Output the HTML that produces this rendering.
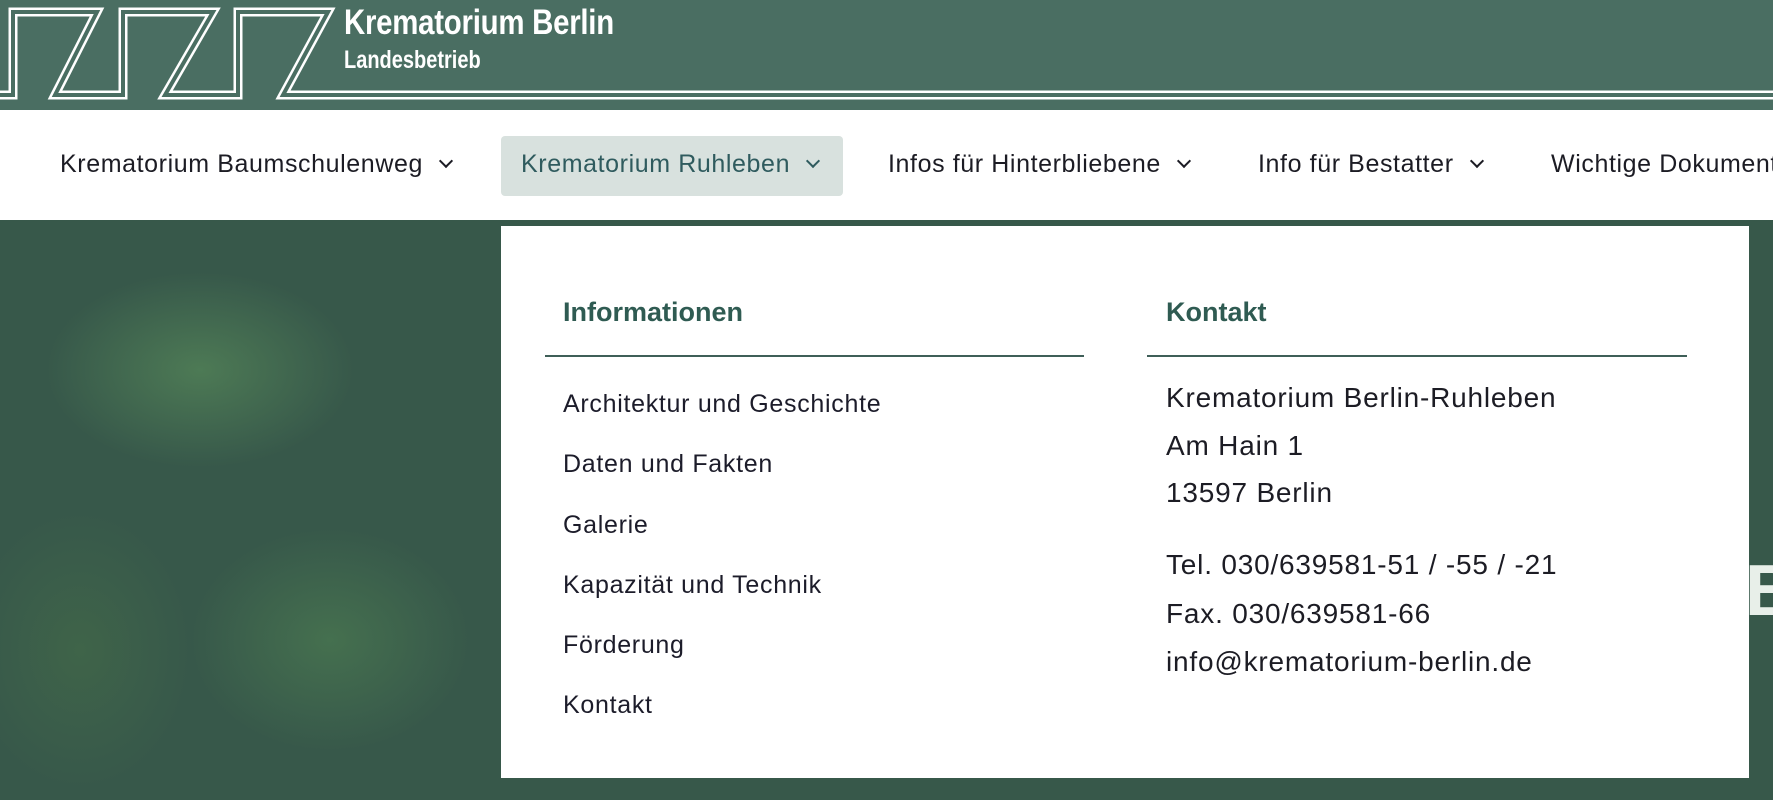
<!DOCTYPE html>
<html><head><meta charset="utf-8"><style>
*{margin:0;padding:0;box-sizing:border-box}
body{width:1773px;height:800px;overflow:hidden;position:relative;font-family:"Liberation Sans",sans-serif;background:#36564a}
#hdr{position:absolute;left:0;top:0;width:1773px;height:110px;background:#4a6e62}
#nav{position:absolute;left:0;top:110px;width:1773px;height:110px;background:#fff}
.ni{position:absolute;top:150px;font-size:25px;color:#1c1c24;white-space:nowrap;letter-spacing:0.6px}
.chev{display:inline-block;width:10px;height:10px;border-right:2.5px solid currentColor;border-bottom:2.5px solid currentColor;transform:rotate(45deg);margin-left:18px;position:relative;top:-6px}
#btn{position:absolute;left:501px;top:136px;width:342px;height:60px;background:#d8e1de;border-radius:4px}
#bg{position:absolute;left:0;top:220px;width:1773px;height:580px;background:
radial-gradient(ellipse 220px 140px at 200px 150px,#4d7a55 0%,transparent 70%),
radial-gradient(ellipse 200px 160px at 330px 420px,#45704f 0%,transparent 70%),
radial-gradient(ellipse 160px 200px at 80px 430px,#3f6449 0%,transparent 70%),
#37584a}
#dd{position:absolute;left:501px;top:226px;width:1248px;height:552px;background:#fff}
.h{position:absolute;font-size:27px;font-weight:bold;color:#2f5b52;letter-spacing:0px}
.ln{position:absolute;height:1.5px;background:#3f5f58}
.lk{position:absolute;left:563px;font-size:25px;color:#1c1c2a;letter-spacing:0.7px}
.ct{position:absolute;left:1166px;font-size:28px;color:#1c1c24;letter-spacing:0.8px}
</style></head><body>
<div id="hdr">
<svg width="1773" height="110" style="position:absolute;left:0;top:0">
<path d="M0 95 H13 V12 H97 L55 95 H123 V12 H213 L165 95 H238 V12 H328 L283 95 H1773" fill="none" stroke="#fff" stroke-width="9" stroke-linejoin="miter"/>
<path d="M0 95 H13 V12 H97 L55 95 H123 V12 H213 L165 95 H238 V12 H328 L283 95 H1773" fill="none" stroke="#4a6e62" stroke-width="4" stroke-linejoin="miter"/>
</svg>
<div style="position:absolute;left:344px;top:3px;color:#fff;font-weight:bold;font-size:35px;transform:scaleX(0.84);transform-origin:left;letter-spacing:-0.3px">Krematorium Berlin</div>
<div style="position:absolute;left:344px;top:46px;color:#fff;font-weight:bold;font-size:25px;transform:scaleX(0.8);transform-origin:left">Landesbetrieb</div>
</div>
<div id="nav"></div>
<div id="btn"></div>
<div class="ni" style="left:60px">Krematorium Baumschulenweg<span class="chev"></span></div>
<div class="ni" style="left:521px;color:#2f5b5e">Krematorium Ruhleben<span class="chev"></span></div>
<div class="ni" style="left:888px">Infos für Hinterbliebene<span class="chev"></span></div>
<div class="ni" style="left:1258px">Info für Bestatter<span class="chev"></span></div>
<div class="ni" style="left:1551px">Wichtige Dokumente</div>
<div id="bg"></div>
<div style="position:absolute;left:1745px;top:550px;color:#e8efe9;font-size:72px;font-weight:bold">B</div>
<div id="dd"></div>
<div class="h" style="left:563px;top:297px">Informationen</div>
<div class="h" style="left:1166px;top:297px">Kontakt</div>
<div class="ln" style="left:545px;top:355px;width:539px"></div>
<div class="ln" style="left:1147px;top:355px;width:540px"></div>
<div class="lk" style="top:390px">Architektur und Geschichte</div>
<div class="lk" style="top:450px">Daten und Fakten</div>
<div class="lk" style="top:511px">Galerie</div>
<div class="lk" style="top:571px">Kapazität und Technik</div>
<div class="lk" style="top:631px">Förderung</div>
<div class="lk" style="top:691px">Kontakt</div>
<div class="ct" style="top:382px">Krematorium Berlin-Ruhleben</div>
<div class="ct" style="top:430px">Am Hain 1</div>
<div class="ct" style="top:477px">13597 Berlin</div>
<div class="ct" style="top:549px">Tel. 030/639581-51 / -55 / -21</div>
<div class="ct" style="top:598px">Fax. 030/639581-66</div>
<div class="ct" style="top:646px">info@krematorium-berlin.de</div>
</body></html>
